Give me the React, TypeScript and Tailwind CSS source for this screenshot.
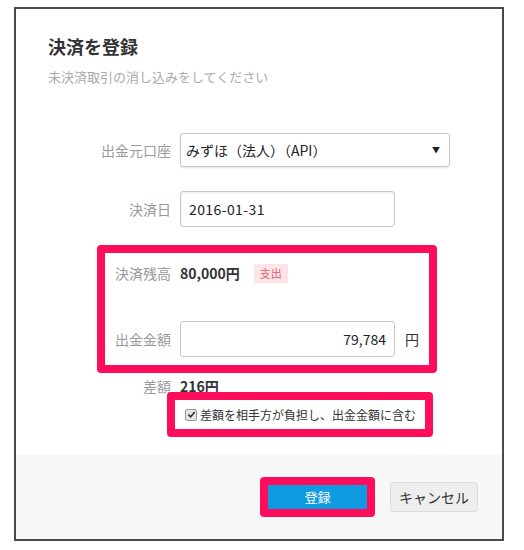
const jp = { fontFamily: '"Noto Sans CJK JP", "Noto Sans", sans-serif' };

function Check() {
  return (
    <span className="shrink-0 w-[12px] h-[12px] rounded-[2px] border border-[#9a9a9a] bg-[#e4e4e4] flex items-center justify-center">
      <svg width="9" height="9" viewBox="0 0 10 10">
        <path d="M1.5 5.2 L4 7.6 L8.6 2.2" fill="none" stroke="#333" strokeWidth="1.8" />
      </svg>
    </span>
  );
}

export default function App() {
  return (
    <div className="w-[524px] h-[550px] bg-white pt-[7px] pl-[14px] text-[#333]" style={jp}>
      <div className="w-[490px] h-[534px] border-2 border-[#4a4a4a] bg-white flex flex-col">
        {/* Body */}
        <div className="flex-1 px-[32px] pt-[24px]">
          <h2 className="text-[18px] leading-[26px] font-bold text-[#333]">決済を登録</h2>
          <p className="mt-[8px] text-[13px] leading-[20px] text-[#aaa]">未決済取引の消し込みをしてください</p>

          {/* 出金元口座 */}
          <div className="mt-[46px] flex items-center">
            <span className="w-[123px] text-right text-[14px] text-[#999]">出金元口座</span>
            <div className="ml-[9px] w-[270px] h-[34px] border border-[#c8c8c8] rounded-[3px] shadow-[0_1px_2px_rgba(0,0,0,0.12)] flex items-center justify-between pl-[5px] pr-[9px]">
              <span className="text-[14px] text-[#222]">みずほ（法人）（API）</span>
              <span className="text-[8px] text-[#222]">▼</span>
            </div>
          </div>

          {/* 決済日 */}
          <div className="mt-[24px] flex items-center">
            <span className="w-[123px] text-right text-[14px] text-[#999]">決済日</span>
            <div className="ml-[9px] w-[215px] h-[36px] border border-[#c8c8c8] rounded-[3px] shadow-[inset_0_1px_2px_rgba(0,0,0,0.08)] flex items-center pl-[8px]">
              <span className="text-[14px] text-[#222] tracking-[0.4px]">2016-01-31</span>
            </div>
          </div>

          {/* 決済残高 / 出金金額 */}
          <div className="mt-[18px] ml-[49px] w-[340px] border-[8px] border-[#fd0d5b] rounded-[4px] pt-[10px] pb-[8px]">
            <div className="flex items-center h-[20px]">
              <span className="w-[66px] text-right text-[14px] text-[#999]">決済残高</span>
              <span className="ml-[9px] text-[14px] font-bold text-[#333]">80,000円</span>
              <span className="ml-[14px] px-[6px] h-[19px] leading-[19px] bg-[#fde4e7] text-[#e06070] text-[11px]">支出</span>
            </div>
            <div className="mt-[38px] flex items-center">
              <span className="w-[66px] text-right text-[14px] text-[#999]">出金金額</span>
              <div className="ml-[9px] w-[215px] h-[36px] border border-[#c8c8c8] rounded-[3px] flex items-center justify-end pr-[8px]">
                <span className="text-[14px] text-[#222]">79,784</span>
              </div>
              <span className="ml-[10px] text-[14px] text-[#333]">円</span>
            </div>
          </div>

          {/* 差額 */}
          <div className="mt-[3px] flex items-center h-[20px]">
            <span className="w-[123px] text-right text-[14px] text-[#999]">差額</span>
            <span className="ml-[9px] text-[14px] font-bold text-[#333]">216円</span>
          </div>
          <div className="relative -mt-[4px] ml-[119px] w-[266px] h-[45px] border-[8px] border-[#fd0d5b] rounded-[4px] bg-white flex items-center pl-[10px] gap-[3px]">
            <Check />
            <span className="text-[12px] whitespace-nowrap text-[#333]">差額を相手方が負担し、出金金額に含む</span>
          </div>
        </div>

        {/* Footer */}
        <div className="h-[84px] bg-[#f7f7f7] flex items-center justify-end pr-[24px] gap-[15px]">
          <div className="p-[8px] bg-[#fd0d5b] rounded-[4px]">
            <div className="w-[99px] h-[24px] bg-[#0f9be2] flex items-center justify-center text-white text-[13px]">登録</div>
          </div>
          <div className="w-[88px] h-[30px] bg-[#eeeeee] border border-[#dcdcdc] rounded-[3px] flex items-center justify-center text-[14px] text-[#333]">キャンセル</div>
        </div>
      </div>
    </div>
  );
}
